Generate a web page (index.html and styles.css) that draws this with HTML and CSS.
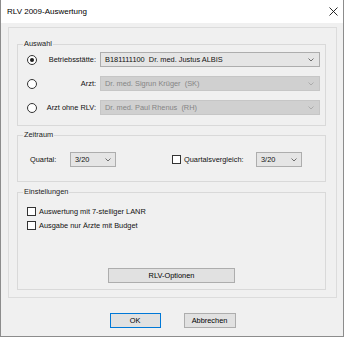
FILE: index.html
```html
<!DOCTYPE html>
<html lang="de">
<head>
    <meta charset="UTF-8">
    <title>RLV 2009-Auswertung</title>
    <link rel="stylesheet" href="styles.css">
</head>
<body>
    <div class="window">
        <div class="titlebar">
            <span class="title">RLV 2009-Auswertung</span>
            <span class="close">
                <svg width="9" height="9" viewBox="0 0 9 9"><path d="M0.5 0.5 L8.5 8.5 M8.5 0.5 L0.5 8.5" stroke="#111" stroke-width="0.9" fill="none"/></svg>
            </span>
        </div>

        <div class="client">
            <div class="panel">
                <fieldset class="group">
                    <legend>Auswahl</legend>
                    <div class="auswahl-grid">
                        <span class="radio checked"></span>
                        <span class="lbl">Betriebsstätte:</span>
                        <div class="combo">
                            <span>B181111100&nbsp;&nbsp;Dr. med. Justus ALBIS</span>
                            <svg class="chev" width="6" height="4" viewBox="0 0 6 4"><polyline points="0.5,0.5 3,3 5.5,0.5" fill="none" stroke="#606060" stroke-width="0.9"/></svg>
                        </div>

                        <span class="radio"></span>
                        <span class="lbl">Arzt:</span>
                        <div class="combo disabled">
                            <span>Dr. med. Sigrun Krüger&nbsp;&nbsp;(SK)</span>
                            <svg class="chev" width="6" height="4" viewBox="0 0 6 4"><polyline points="0.5,0.5 3,3 5.5,0.5" fill="none" stroke="#a8a8a8" stroke-width="0.9"/></svg>
                        </div>

                        <span class="radio"></span>
                        <span class="lbl">Arzt ohne RLV:</span>
                        <div class="combo disabled">
                            <span>Dr. med. Paul Rhenus&nbsp;&nbsp;(RH)</span>
                            <svg class="chev" width="6" height="4" viewBox="0 0 6 4"><polyline points="0.5,0.5 3,3 5.5,0.5" fill="none" stroke="#a8a8a8" stroke-width="0.9"/></svg>
                        </div>
                    </div>
                </fieldset>

                <fieldset class="group zeitraum">
                    <legend>Zeitraum</legend>
                    <div class="zeit-row">
                        <span class="zeit-lbl">Quartal:</span>
                        <div class="combo small">
                            <span>3/20</span>
                            <svg class="chev" width="6" height="4" viewBox="0 0 6 4"><polyline points="0.5,0.5 3,3 5.5,0.5" fill="none" stroke="#606060" stroke-width="0.9"/></svg>
                        </div>
                        <span class="check vergleich"></span>
                        <span class="vergleich-lbl">Quartalsvergleich:</span>
                        <div class="combo small">
                            <span>3/20</span>
                            <svg class="chev" width="6" height="4" viewBox="0 0 6 4"><polyline points="0.5,0.5 3,3 5.5,0.5" fill="none" stroke="#606060" stroke-width="0.9"/></svg>
                        </div>
                    </div>
                </fieldset>

                <fieldset class="group einstellungen">
                    <legend>Einstellungen</legend>
                    <div class="check-row"><span class="check"></span><span>Auswertung mit 7-stelliger LANR</span></div>
                    <div class="check-row"><span class="check"></span><span>Ausgabe nur Ärzte mit Budget</span></div>
                    <button class="btn options">RLV-Optionen</button>
                </fieldset>
            </div>

            <div class="buttons">
                <button class="btn default">OK</button>
                <button class="btn cancel">Abbrechen</button>
            </div>
        </div>
    </div>
</body>
</html>
```

FILE: styles.css
```css
* {
    box-sizing: border-box;
}
body {
    margin: 0;
    font-family: "Liberation Sans", Arial, sans-serif;
    font-size: 7.4px;
    color: #111;
    background: #f0f0f0;
}
.window {
    width: 344px;
    height: 337px;
    border: 1px solid #8c8c8c;
    border-top: none;
    background: #f0f0f0;
    display: flex;
    flex-direction: column;
}
.titlebar {
    height: 23px;
    background: #fff;
    display: flex;
    align-items: center;
    justify-content: space-between;
    padding: 0 5px 0 6px;
}
.title {
    font-size: 8px;
    color: #000;
}
.close {
    width: 9px;
    height: 9px;
    display: flex;
}
.client {
    flex: 1;
    display: flex;
    flex-direction: column;
    padding: 4px 6px 8px 7px;
}
.panel {
    border: 1px solid #dcdcdc;
    padding: 11px 10px 7px 8px;
    display: flex;
    flex-direction: column;
}
.group {
    margin: 0;
    padding: 0;
    min-width: 0;
    border: 1px solid #d9d9d9;
}
.group legend {
    margin-left: 5px;
    padding: 0 1px;
    height: 10px;
    line-height: 10px;
    color: #1a1a1a;
}
.auswahl-grid {
    display: grid;
    grid-template-columns: 10px 63px 1fr;
    grid-auto-rows: 15px;
    row-gap: 9px;
    align-items: center;
    padding: 3px 5px 10px 9px;
}
.radio {
    width: 10px;
    height: 10px;
    border: 1px solid #333;
    border-radius: 50%;
    background: #fff;
    display: flex;
    align-items: center;
    justify-content: center;
}
.radio.checked::after {
    content: "";
    width: 4px;
    height: 4px;
    border-radius: 50%;
    background: #1e1e1e;
}
.lbl {
    text-align: right;
    padding-right: 4px;
    white-space: nowrap;
}
.combo {
    height: 15px;
    border: 1px solid #adadad;
    background: #e5e5e5;
    display: flex;
    align-items: center;
    justify-content: space-between;
    padding: 0 5px 0 4px;
    white-space: nowrap;
}
.combo.disabled {
    background: #d0d0d0;
    border-color: #c6c6c6;
    color: #858585;
}
.combo.small {
    width: 46px;
    padding-right: 4px;
}
.zeitraum {
    margin-top: 4px;
}
.zeit-row {
    display: flex;
    align-items: center;
    padding: 12px 0 14px 12px;
}
.zeit-lbl {
    width: 40px;
}
.check {
    width: 9px;
    height: 9px;
    border: 1px solid #333;
    background: #fff;
    flex: none;
}
.check.vergleich {
    margin-left: 56px;
}
.vergleich-lbl {
    width: 72px;
    margin-left: 3px;
}
.einstellungen {
    margin-top: 5px;
    display: flex;
    flex-direction: column;
    padding: 7px 0 6px 0;
}
.check-row {
    height: 14px;
    display: flex;
    align-items: center;
    gap: 3px;
    padding-left: 9px;
}
.btn {
    font-family: inherit;
    font-size: 7.4px;
    color: #000;
    height: 15px;
    padding: 0;
    border: 1px solid #adadad;
    background: #e1e1e1;
}
.options {
    width: 127px;
    margin: 36px auto 0 auto;
}
.buttons {
    margin-top: 15px;
    display: flex;
    justify-content: center;
    gap: 23px;
}
.default {
    width: 51px;
    border-color: #0078d7;
}
.cancel {
    width: 52px;
}
```
